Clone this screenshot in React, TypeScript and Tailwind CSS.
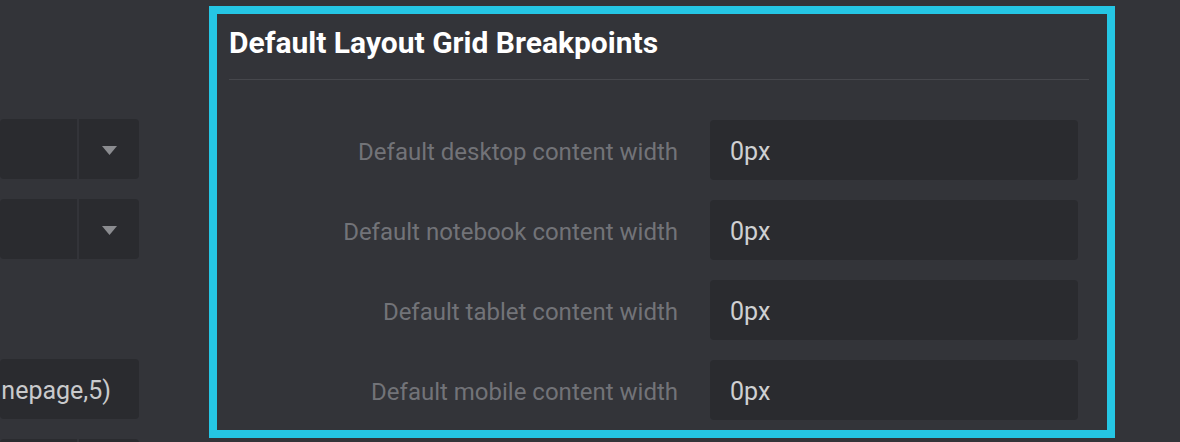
import React from "react";

const rows = [
  "Default desktop content width",
  "Default notebook content width",
  "Default tablet content width",
  "Default mobile content width",
];

function Caret() {
  return (
    <svg width="15" height="9" viewBox="0 0 15 9" className="text-[#8b8c90]">
      <path d="M0 0h15L7.5 9z" fill="currentColor" />
    </svg>
  );
}

function SelectBox() {
  return (
    <div className="flex h-[60px] w-[139px] gap-[2px]">
      <div className="flex-1 rounded-l-[4px] bg-[#2a2b2f]" />
      <div className="flex w-[60px] items-center justify-center rounded-r-[4px] bg-[#2a2b2f] pt-[2px]">
        <Caret />
      </div>
    </div>
  );
}

export default function App() {
  return (
    <div
      className="flex h-[442px] w-[1180px] overflow-hidden bg-[#333439]"
      style={{ fontFamily: "Roboto, 'Noto Sans', sans-serif" }}
    >
      <div className="flex w-[149px] shrink-0 flex-col">
        <div className="mt-[79px] h-px bg-[#46474c]" />
        <div className="mt-[40px] flex flex-col gap-5">
          <SelectBox />
          <SelectBox />
          <div className="h-[60px]" />
          <div className="flex h-[60px] w-[139px] items-center justify-end overflow-hidden rounded-[4px] bg-[#2a2b2f] pt-[3px] pr-[28px] text-[25px] whitespace-nowrap text-[#c9cacc]">
            nepage,5)
          </div>
          <SelectBox />
        </div>
      </div>

      <div className="ml-[60px] mt-[6px] h-[432px] w-[906px] shrink-0 border-[8px] border-[#25c6e4] pl-[12px] pr-[18px]">
        <h2 className="pt-[11px] text-[30px] leading-[36px] font-bold text-white">
          Default Layout Grid Breakpoints
        </h2>
        <div className="mt-[18px] h-px bg-[#46474c]" />
        <div className="mr-[11px] mt-[40px] flex flex-col gap-5">
          {rows.map((label) => (
            <div key={label} className="flex h-[60px] items-center">
              <span className="flex-1 pt-[4px] text-right text-[24px] text-[#727378]">{label}</span>
              <div className="ml-[32px] flex h-full w-[368px] items-center rounded-[4px] bg-[#2a2b2f] px-[20px] pt-[3px] text-[25px] text-[#cfd0d2]">
                0px
              </div>
            </div>
          ))}
        </div>
      </div>
    </div>
  );
}
